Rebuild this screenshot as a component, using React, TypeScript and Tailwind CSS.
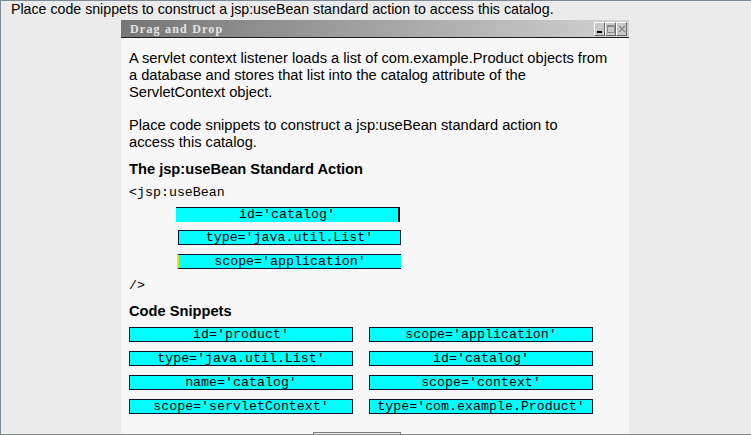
import React from 'react'

const mono = "font-['Liberation_Mono','Courier_New',monospace]"

function Snippet({ text }: { text: string }) {
  return (
    <div className={`h-[15px] w-[224px] border border-[#10142a] bg-[#00ffff] text-center text-[13.3px] leading-[13px] text-black ${mono}`}>
      {text}
    </div>
  )
}

function TitleButton({ children }: { children: React.ReactNode }) {
  return (
    <div className="flex h-[14px] w-[11px] items-center justify-center border border-t-white border-l-white border-r-[#6a6a6a] border-b-[#6a6a6a] bg-[#c8c8c8]">
      {children}
    </div>
  )
}

const snippets = [
  ["id='product'", "scope='application'"],
  ["type='java.util.List'", "id='catalog'"],
  ["name='catalog'", "scope='context'"],
  ["scope='servletContext'", "type='com.example.Product'"],
]

export default function App() {
  return (
    <div className="box-border h-[435px] w-[751px] overflow-hidden border-l border-t border-b border-[#7f8a97] bg-[#ebebeb] font-['Liberation_Sans',Arial,sans-serif] text-black">
      {/* Question line */}
      <div className="h-[19px] pl-[10px] text-[14.2px] leading-[17px]">
        Place code snippets to construct a jsp:useBean standard action to access this catalog.
      </div>

      {/* Drag and drop window */}
      <div className="ml-[120px] flex h-[414px] w-[508px] flex-col overflow-hidden bg-[#f7f7f7]">
        <div className="flex h-[18px] shrink-0 items-center justify-between border-b border-[#1e1e1e] bg-gradient-to-r from-[#767676] to-[#d2d2d2] pl-[9px] pr-[2px]">
          <span className="font-['Liberation_Serif',serif] text-[12px] font-bold tracking-[1.2px] text-[#e4e4e4]">
            Drag and Drop
          </span>
          <div className="flex">
            <TitleButton>
              <div className="mt-[6px] h-[2px] w-[5px] bg-black" />
            </TitleButton>
            <TitleButton>
              <div className="h-[8px] w-[8px] border border-t-2 border-[#8a8a8a]" />
            </TitleButton>
            <TitleButton>
              <svg width="8" height="8" viewBox="0 0 8 8">
                <path d="M1 1L7 7M7 1L1 7" stroke="#8a8a8a" strokeWidth="1.2" />
              </svg>
            </TitleButton>
          </div>
        </div>

        <div className="px-[8px] pt-[12px] text-[14.67px] leading-[17px]">
          <p className="w-[484px]">
            A servlet context listener loads a list of com.example.Product objects from a database and stores that list into the catalog attribute of the ServletContext object.
          </p>
          <p className="mt-[16px] w-[465px]">
            Place code snippets to construct a jsp:useBean standard action to access this catalog.
          </p>

          <h3 className="mt-[10px] text-[14.67px] font-bold leading-[17px]">The jsp:useBean Standard Action</h3>
          <div className={`mt-[7px] text-[13.3px] leading-[16px] ${mono}`}>&lt;jsp:useBean</div>

          {/* Drop targets */}
          <div className="mt-[6px] flex flex-col">
            <div className={`ml-[47px] h-[15px] w-[224px] border-t border-r-2 border-[#10142a] bg-[#00ffff] text-center text-[13.3px] leading-[14px] ${mono}`}>
              id='catalog'
            </div>
            <div className={`ml-[49px] mt-[8px] h-[15px] w-[223px] border border-[#10142a] bg-[#00ffff] text-center text-[13.3px] leading-[13px] ${mono}`}>
              type='java.util.List'
            </div>
            <div className={`ml-[48px] mt-[9px] h-[15px] w-[224px] border-t border-b border-l-2 border-[#10142a] border-l-[#e8e800] bg-[#00ffff] text-center text-[13.3px] leading-[13px] ${mono}`}>
              scope='application'
            </div>
          </div>

          <div className={`mt-[9px] text-[13.3px] leading-[16px] ${mono}`}>/&gt;</div>

          <h3 className="mt-[9px] text-[14.67px] font-bold leading-[17px]">Code Snippets</h3>
          <div className="mt-[7px] grid w-[464px] grid-cols-2 gap-x-[16px] gap-y-[9px]">
            {snippets.map(([a, b]) => (
              <React.Fragment key={a}>
                <Snippet text={a} />
                <Snippet text={b} />
              </React.Fragment>
            ))}
          </div>

          <div className="ml-[184px] mt-[18px] h-[24px] w-[88px] border border-[#7a7a7a] bg-[#f0f0f0]" />
        </div>
      </div>
    </div>
  )
}
